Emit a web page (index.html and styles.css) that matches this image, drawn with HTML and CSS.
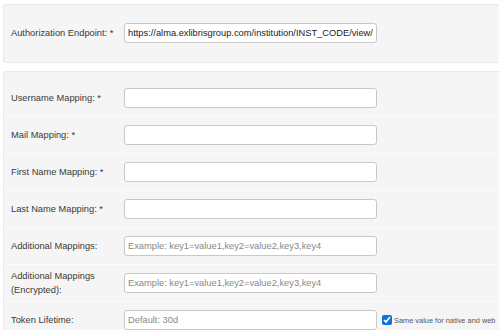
FILE: index.html
```html
<!DOCTYPE html>
<html lang="en">
<head>
    <meta charset="UTF-8">
    <meta name="viewport" content="width=device-width, initial-scale=1.0">
    <title>Authentication Profile</title>
    <link rel="stylesheet" href="styles.css">
</head>
<body>
    <div class="panel panel-top">
        <div class="row">
            <label class="lbl">Authorization Endpoint: *</label>
            <input class="field" type="text" value="https://alma.exlibrisgroup.com/institution/INST_CODE/view/s">
        </div>
    </div>

    <div class="panel panel-main">
        <div class="row">
            <label class="lbl">Username Mapping: *</label>
            <input class="field" type="text">
        </div>
        <div class="row">
            <label class="lbl">Mail Mapping: *</label>
            <input class="field" type="text">
        </div>
        <div class="row">
            <label class="lbl">First Name Mapping: *</label>
            <input class="field" type="text">
        </div>
        <div class="row">
            <label class="lbl">Last Name Mapping: *</label>
            <input class="field" type="text">
        </div>
        <div class="row">
            <label class="lbl">Additional Mappings:</label>
            <input class="field" type="text" placeholder="Example: key1=value1,key2=value2,key3,key4">
        </div>
        <div class="row">
            <label class="lbl">Additional Mappings<br>(Encrypted):</label>
            <input class="field" type="text" placeholder="Example: key1=value1,key2=value2,key3,key4">
        </div>
        <div class="row">
            <label class="lbl">Token Lifetime:</label>
            <input class="field" type="text" placeholder="Default: 30d">
            <label class="same">
                <input type="checkbox" checked>
                <span>Same value for native and web</span>
            </label>
        </div>
    </div>
</body>
</html>
```

FILE: styles.css
```css
body {
	margin: 0;
	padding: 0;
	font-family: "Liberation Sans", Arial, sans-serif;
	font-size: 9.3px;
	color: #3a3a3a;
	background-color: #fff;
	overflow: hidden;
	width: 499px;
	height: 330px;
}

.panel {
	margin-left: 3px;
	width: 520px;
	background-color: #f5f5f5;
	border: 1px solid #e8e8e8;
	border-right: none;
	border-radius: 3px 0 0 3px;
	box-sizing: border-box;
}

.panel-top {
	margin-top: 4px;
	height: 59px;
	display: flex;
	align-items: center;
}

.panel-main {
	margin-top: 8px;
	padding-top: 8px;
}

.row {
	display: flex;
	align-items: center;
	height: 36px;
	border-bottom: 1px solid #fbfbfb;
	white-space: nowrap;
}

.panel-top .row {
	border-bottom: none;
	width: 100%;
	margin-top: -1px;
}

.lbl {
	width: 113px;
	padding-left: 7px;
	line-height: 14px;
	flex-shrink: 0;
}

.field {
	width: 253px;
	height: 20px;
	box-sizing: border-box;
	margin: 0;
	padding: 0 3px;
	border: 1px solid #c8c8c8;
	border-radius: 3px;
	background-color: #fff;
	font-family: "Liberation Sans", Arial, sans-serif;
	font-size: 9.3px;
	color: #222;
	flex-shrink: 0;
}

.field::placeholder {
	color: #888;
}

.same {
	display: flex;
	align-items: center;
	margin-left: 5px;
	font-size: 7.4px;
	color: #555;
}

.same input {
	width: 10px;
	height: 10px;
	margin: 0 2px 0 0;
	accent-color: #0a74da;
}
```
